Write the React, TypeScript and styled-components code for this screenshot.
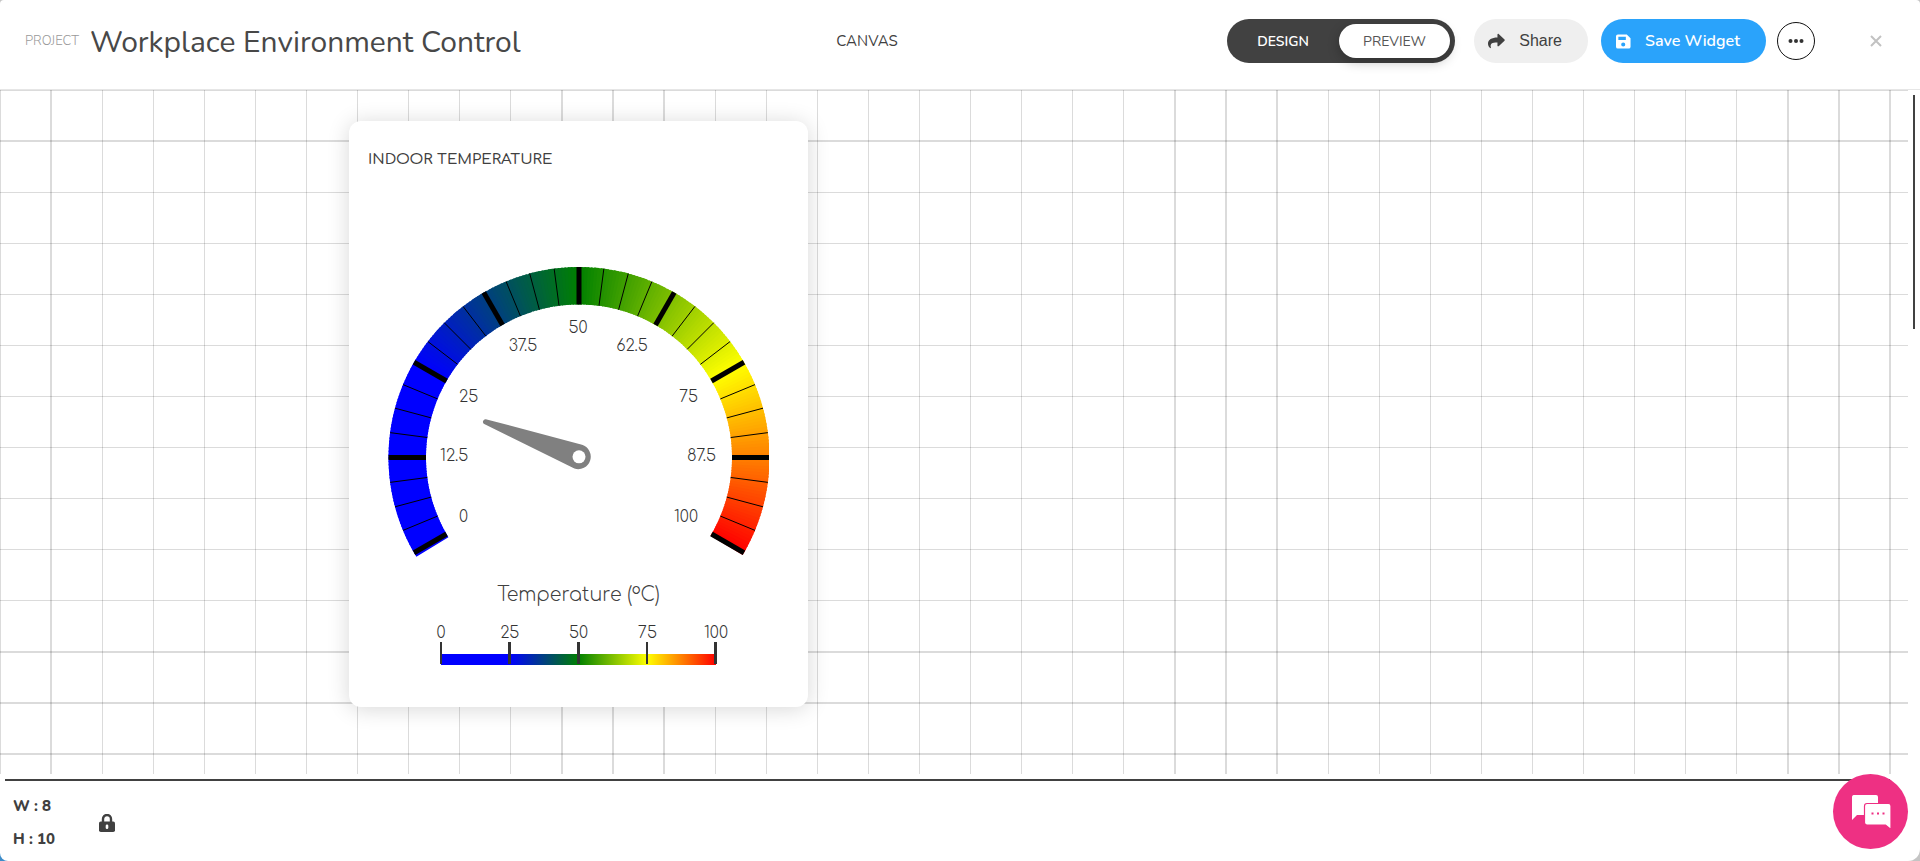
import React from "react";
import styled, { createGlobalStyle } from "styled-components";

const GlobalStyle = createGlobalStyle`
  * { box-sizing: border-box; }
  html, body, #root { height: 100%; }
  body {
    margin: 0;
    overflow: hidden;
    background: linear-gradient(#3d8cc9, #3d8cc9) 0 100% / 20px 20px no-repeat #c4c4c4;
    font-family: Nunito, "Open Sans", sans-serif;
    color: #404040;
  }
  button { font-family: inherit; cursor: pointer; padding: 0; border: 0; }
`;

const Page = styled.div`
  display: flex;
  flex-direction: column;
  height: 100%;
  background: #fff;
  border-radius: 4px 4px 12px 8px;
  overflow: hidden;
`;

const Header = styled.header`
  display: grid;
  grid-template-columns: 1fr auto 1fr;
  align-items: start;
  height: 90px;
  flex: none;
  padding: 18px 37px 0 25px;
  border-bottom: 1px solid #e6e6e6;
`;

const ProjectName = styled.div`
  display: flex;
  align-items: flex-start;
  gap: 11px;
  white-space: nowrap;
`;

const Eyebrow = styled.span`
  font-size: 13px;
  font-weight: 300;
  color: #999;
  line-height: 46px;
`;

const Title = styled.h1`
  margin: 0;
  font-size: 30px;
  line-height: 50px;
  font-weight: 400;
  color: #484848;
`;

const CanvasLabel = styled.span`
  font-size: 15px;
  line-height: 46px;
  padding-right: 174px;
`;

const Actions = styled.div`
  display: flex;
  justify-content: flex-end;
  align-items: center;
  height: 46px;
`;

const ModeSwitch = styled.div`
  display: flex;
  align-items: center;
  width: 228px;
  height: 44px;
  padding-right: 5px;
  border-radius: 22px;
  background: #414141;
  margin-right: 19px;
`;

const ModeButton = styled.button<{ $active?: boolean }>`
  flex: 1 1 0;
  height: 34px;
  border-radius: 17px;
  font-size: 14px;
  font-weight: ${(p) => (p.$active ? 400 : 600)};
  color: ${(p) => (p.$active ? "#555" : "#fff")};
  background: ${(p) => (p.$active ? "#fff" : "transparent")};
  box-shadow: ${(p) => (p.$active ? "0 4px 12px rgba(0,0,0,0.25)" : "none")};
`;

const PillButton = styled.button<{ $primary?: boolean }>`
  display: flex;
  align-items: center;
  gap: 14px;
  height: 44px;
  padding: ${(p) => (p.$primary ? "0 26px 0 15px" : "0 26px 0 14px")};
  border-radius: 22px;
  font-size: 16px;
  margin-right: ${(p) => (p.$primary ? "11px" : "13px")};
  color: ${(p) => (p.$primary ? "#fff" : "#404040")};
  background: ${(p) => (p.$primary ? "#2aa3fb" : "#efefef")};
  && { font-family: ${(p) => (p.$primary ? 'Nunito, "Open Sans", sans-serif' : '"Liberation Sans", sans-serif')}; }
  font-weight: ${(p) => (p.$primary ? 600 : 400)};
`;

const MoreButton = styled.button`
  display: grid;
  place-items: center;
  width: 38px;
  height: 38px;
  border: 1px solid #111;
  border-radius: 50%;
  background: #fff;
  margin-right: 54px;
`;

const CloseButton = styled.button`
  display: grid;
  place-items: center;
  width: 14px;
  height: 14px;
  background: none;
`;

const Workspace = styled.main`
  position: relative;
  display: flex;
  flex: 1;
  min-height: 0;
  padding-right: 12px;
`;

const GridLines = styled.svg`
  display: block;
  flex: 1;
  min-width: 0;
  height: 100%;
  fill: rgba(0, 0, 0, 0.14);
`;

const VerticalThumb = styled.div`
  position: absolute;
  right: 5px;
  top: 5px;
  width: 2px;
  height: 234px;
  background: #414141;
`;

const Widget = styled.section`
  position: absolute;
  left: 349px;
  top: 31px;
  width: 459px;
  padding: 26px 19px 40px;
  border-radius: 12px;
  background: #fff;
  box-shadow: 0 2px 22px rgba(0, 0, 0, 0.16);
  font-family: Comfortaa, Lato, sans-serif;
`;

const WidgetTitle = styled.h2`
  margin: 0 0 92px;
  font-size: 15px;
  line-height: 26px;
  font-weight: 500;
`;

const GaugeDrawing = styled.svg`
  display: block;
  margin: 0 auto;
  font-size: 16px;
  font-weight: 300;
  fill: #333;
`;

const LegendTitle = styled.h3`
  margin: 24px 0 12px;
  text-align: center;
  font-size: 19px;
  line-height: 28px;
  font-weight: 300;
`;

const Footer = styled.footer`
  position: relative;
  display: flex;
  align-items: center;
  flex: none;
  height: 87px;
  padding: 11px 0 0 13px;
  gap: 44px;
`;

const HorizontalThumb = styled.div`
  position: absolute;
  left: 5px;
  right: 30px;
  top: 5px;
  height: 2px;
  background: #414141;
`;

const Sizes = styled.div`
  font-size: 15px;
  line-height: 33px;
  font-weight: 800;
  white-space: nowrap;
`;

const LockButton = styled.button`
  display: grid;
  place-items: center;
  background: none;
`;

const ChatButton = styled.button`
  position: absolute;
  right: 12px;
  top: 0;
  display: grid;
  place-items: center;
  width: 75px;
  height: 75px;
  border-radius: 50%;
  background: #ee3083;
`;

const STEP = 613 / 12;
const gridLine = (n: number) => {
  const thick = n > 0 && [11, 0, 1].includes(n % 12);
  return { at: thick ? Math.round(n * STEP) - 1 : Math.floor(n * STEP), size: thick ? 2 : 1 };
};
const gridLines = Array.from({ length: 60 }, (_, n) => gridLine(n));

const stops = [
  [0, 0, 255],
  [0, 0, 255],
  [0, 128, 0],
  [255, 255, 0],
  [255, 0, 0],
];
const colorAt = (value: number) => {
  const v = Math.min(99.99, Math.max(0, value)) / 25;
  const i = Math.floor(v);
  const c = stops[i].map((s, k) => Math.round(s + (stops[i + 1][k] - s) * (v - i)));
  return `rgb(${c.join(",")})`;
};

const CX = 191;
const CY = 192.5;
const OUTER = 190.5;
const INNER = 153;
const point = (deg: number, r: number) => {
  const a = (deg * Math.PI) / 180;
  return `${(CX + r * Math.sin(a)).toFixed(2)} ${(CY - r * Math.cos(a)).toFixed(2)}`;
};
const slice = (from: number, to: number) =>
  `M${point(from, OUTER)}A${OUTER} ${OUTER} 0 0 1 ${point(to, OUTER)}L${point(to, INNER)}A${INNER} ${INNER} 0 0 0 ${point(from, INNER)}Z`;

const slices = Array.from({ length: 242 }, (_, i) => {
  const from = i - 121.4;
  return { from, to: Math.min(from + 1.5, 120.8), color: colorAt((from + 120.5) / 2.4) };
});

const gaugeLabels: [string, number, number, "start" | "middle" | "end"][] = [
  ["0", 71, 257, "start"],
  ["12.5", 52, 196, "start"],
  ["25", 71, 137, "start"],
  ["37.5", 135, 86, "middle"],
  ["50", 190, 68, "middle"],
  ["62.5", 244, 86, "middle"],
  ["75", 310, 137, "end"],
  ["87.5", 328, 196, "end"],
  ["100", 310, 257, "end"],
];

function Gauge() {
  return (
    <GaugeDrawing width="381" height="292" role="img" aria-label="Indoor temperature gauge">
      {slices.map((s) => (
        <path key={s.from} d={slice(s.from, s.to)} fill={s.color} />
      ))}
      {Array.from({ length: 33 }, (_, i) => (
        <path
          key={i}
          d={`M${point(i * 7.5 - 120, INNER)}L${point(i * 7.5 - 120, OUTER)}`}
          stroke="#000"
          strokeWidth={i % 4 === 0 ? 5 : 1}
        />
      ))}
      {gaugeLabels.map(([text, x, y, anchor]) => (
        <text key={text} x={x} y={y} textAnchor={anchor}>{text}</text>
      ))}
      <path
        d="M97.8 154.2 L194 179.7 A12.5 12.5 0 1 1 186.400 203.600 L96.2 159 A2.6 2.6 0 0 1 97.8 154.2Z"
        fill="#808080"
      />
      <circle cx="191" cy="191.8" r="6.5" fill="#fff" />
    </GaugeDrawing>
  );
}

function Scale() {
  return (
    <GaugeDrawing width="321" height="46" role="img" aria-label="Temperature scale from 0 to 100">
      <defs>
        <linearGradient id="scale">
          <stop offset="0.25" stopColor="#00f" />
          <stop offset="0.5" stopColor="#008000" />
          <stop offset="0.75" stopColor="#ff0" />
          <stop offset="1" stopColor="#f00" />
        </linearGradient>
      </defs>
      <rect x="23" y="33" width="275" height="11" fill="url(#scale)" />
      {[0, 25, 50, 75, 100].map((v, i) => {
        const wide = i % 3 !== 0;
        return (
          <React.Fragment key={v}>
            <rect x={22 + Math.round(v * 2.75) - (wide ? 1 : 0)} y="21" width={wide ? 3 : 2} height="22" />
            <text x={23 + v * 2.75} y="17" textAnchor="middle">{v}</text>
          </React.Fragment>
        );
      })}
    </GaugeDrawing>
  );
}

export default function App() {
  return (
    <Page>
      <GlobalStyle />
      <Header>
        <ProjectName>
          <Eyebrow>PROJECT</Eyebrow>
          <Title>Workplace Environment Control</Title>
        </ProjectName>
        <CanvasLabel>CANVAS</CanvasLabel>
        <Actions>
          <ModeSwitch>
            <ModeButton>DESIGN</ModeButton>
            <ModeButton $active>PREVIEW</ModeButton>
          </ModeSwitch>
          <PillButton>
            <svg width="17" height="16" viewBox="0 0 18 16" fill="#404040">
              <path d="M10 1.2v3.1C4 4.400 0 6.500 0 11c0 1.900 1 3.600 2.300 4.500.4.300.9-.1.800-.5C2 11 4 9.700 10 9.700v3.200c0 .7.800 1 1.300.6l6.200-5.700c.4-.4.400-1 0-1.300L11.300.6C10.800.2 10 .5 10 1.200z" />
            </svg>
            Share
          </PillButton>
          <PillButton $primary>
            <svg width="15" height="15" viewBox="0 0 16 16" fill="#fff" fillRule="evenodd">
              <path d="M2 0.500h9.500L15.500 4.500V13.500a2 2 0 0 1-2 2H2a2 2 0 0 1-2-2v-11a2 2 0 0 1 2-2zM2.500 3v3.500h8V3zM7.700 9a2.200 2.200 0 1 0 0 4.400a2.200 2.200 0 0 0 0-4.400z" />
            </svg>
            Save Widget
          </PillButton>
          <MoreButton aria-label="More options">
            <svg width="16" height="4" fill="#333">
              <circle cx="2.500" cy="2" r="2" />
              <circle cx="8" cy="2" r="2" />
              <circle cx="13.500" cy="2" r="2" />
            </svg>
          </MoreButton>
          <CloseButton aria-label="Close">
            <svg width="12" height="12" stroke="#c2c2c2" strokeWidth="2">
              <path d="M1 1L11 11M11 1L1 11" />
            </svg>
          </CloseButton>
        </Actions>
      </Header>
      <Workspace>
        <GridLines aria-hidden="true">
          {gridLines.map((l) => (
            <rect key={`v${l.at}`} x={l.at} y="0" width={l.size} height="100%" />
          ))}
          {gridLines.map((l) => (
            <rect key={`h${l.at}`} x="0" y={l.at} width="100%" height={l.size} />
          ))}
        </GridLines>
        <Widget>
          <WidgetTitle>INDOOR TEMPERATURE</WidgetTitle>
          <Gauge />
          <LegendTitle>Temperature (ºC)</LegendTitle>
          <Scale />
        </Widget>
        <VerticalThumb />
      </Workspace>
      <Footer>
        <HorizontalThumb />
        <Sizes>
          <div>W : 8</div>
          <div>H : 10</div>
        </Sizes>
        <LockButton aria-label="Lock size">
          <svg width="16" height="18" viewBox="0 0 16 18">
            <path d="M4 8V5a4 4 0 0 1 8 0v3" fill="none" stroke="#404040" strokeWidth="2.400" />
            <rect y="7.500" width="16" height="10.500" rx="1.800" fill="#404040" />
            <rect x="6.700" y="10.500" width="2.600" height="4.500" rx="1.300" fill="#fff" />
          </svg>
        </LockButton>
        <ChatButton aria-label="Open chat">
          <svg width="40" height="36" viewBox="0 0 40 36">
            <path d="M2.500 1H25a2 2 0 0 1 2 2V21H6L1 26V3a2 2 0 0 1 1.500-2z" fill="#fff" />
            <path
              d="M16 9.500H37.500a2.500 2.500 0 0 1 2.500 2.500V35.500L34.500 31H16a2.500 2.500 0 0 1-2.500-2.500V12a2.500 2.500 0 0 1 2.500-2.500z"
              fill="#fff"
              stroke="#ee3083"
              strokeWidth="1.200"
            />
            <g fill="#ee3083">
              <rect x="20.500" y="18.500" width="2" height="2" />
              <rect x="26" y="18.500" width="2" height="2" />
              <rect x="31.500" y="18.500" width="2" height="2" />
            </g>
          </svg>
        </ChatButton>
      </Footer>
    </Page>
  );
}
